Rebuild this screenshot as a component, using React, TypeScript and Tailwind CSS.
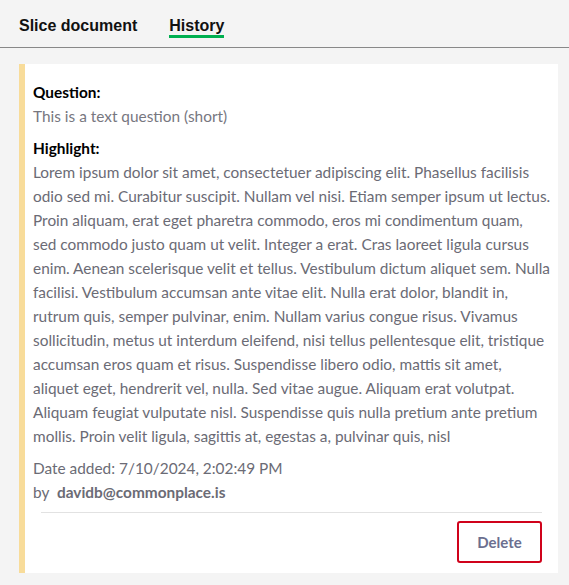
const highlightLines = [
  'Lorem ipsum dolor sit amet, consectetuer adipiscing elit. Phasellus facilisis',
  'odio sed mi. Curabitur suscipit. Nullam vel nisi. Etiam semper ipsum ut lectus.',
  'Proin aliquam, erat eget pharetra commodo, eros mi condimentum quam,',
  'sed commodo justo quam ut velit. Integer a erat. Cras laoreet ligula cursus',
  'enim. Aenean scelerisque velit et tellus. Vestibulum dictum aliquet sem. Nulla',
  'facilisi. Vestibulum accumsan ante vitae elit. Nulla erat dolor, blandit in,',
  'rutrum quis, semper pulvinar, enim. Nullam varius congue risus. Vivamus',
  'sollicitudin, metus ut interdum eleifend, nisi tellus pellentesque elit, tristique',
  'accumsan eros quam et risus. Suspendisse libero odio, mattis sit amet,',
  'aliquet eget, hendrerit vel, nulla. Sed vitae augue. Aliquam erat volutpat.',
  'Aliquam feugiat vulputate nisl. Suspendisse quis nulla pretium ante pretium',
  'mollis. Proin velit ligula, sagittis at, egestas a, pulvinar quis, nisl',
]

export default function App() {
  return (
    <div className="min-h-screen bg-[#f4f4f4] font-['Lato',sans-serif]">
      {/* tabs */}
      <div className="h-[48px] border-b border-[#888] flex items-start pl-[19px] gap-8 font-['Liberation_Sans',Arial,sans-serif] font-bold text-[16px] leading-[19px] text-[#111]">
        <div className="pt-[16px]">Slice document</div>
        <div className="pt-[16px] flex flex-col">
          <span>History</span>
          <span className="h-[3px] bg-[#00b050]" />
        </div>
      </div>

      {/* card */}
      <div className="mt-4 ml-[19px] mr-[11px] bg-white border-l-[6px] border-[#f8dc9a]">
        <div className="pt-4 pl-2 pr-4 text-[15.4px] leading-[24px]">
          <div className="font-bold text-black">Question:</div>
          <div className="text-[#77777f]">This is a text question (short)</div>
          <div className="font-bold text-black mt-2">Highlight:</div>
          <div className="text-[#6b6b75]">
            {highlightLines.map((l, i) => (
              <span key={i} className="block whitespace-nowrap">
                {l}
              </span>
            ))}
          </div>
          <div className="mt-2 text-[#6b6b75]">Date added: 7/10/2024, 2:02:49 PM</div>
          <div className="text-[#6b6b75]">
            by <span className="font-bold ml-1">davidb@commonplace.is</span>
          </div>
        </div>
        <div className="mx-4 mt-[8px] border-t border-[#e2e2e2] pt-[8px] pb-[10px] flex justify-end">
          <button className="w-[85px] h-[42px] border-2 border-[#d0021b] rounded-[3px] text-[15px] font-bold text-[#6b6f8f]">
            Delete
          </button>
        </div>
      </div>
    </div>
  )
}
